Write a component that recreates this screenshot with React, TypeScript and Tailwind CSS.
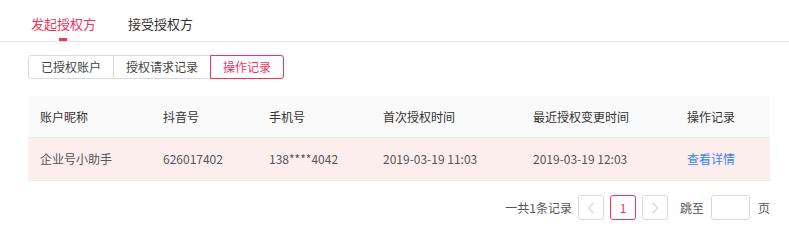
import React from "react";

const font = { fontFamily: '"Noto Sans CJK SC", "Noto Sans", sans-serif' };

export default function App() {
  const cols = [
    { w: "w-[123px]", h: "账户昵称", v: "企业号小助手" },
    { w: "w-[106px]", h: "抖音号", v: "626017402" },
    { w: "w-[114px]", h: "手机号", v: "138****4042" },
    { w: "w-[150px]", h: "首次授权时间", v: "2019-03-19 11:03" },
    { w: "w-[154px]", h: "最近授权变更时间", v: "2019-03-19 12:03" },
  ];
  return (
    <div className="w-[789px] h-[242px] bg-white text-[#333]" style={font}>
      <div className="flex h-[42px] border-b border-[#e8e8e8] pl-[31px] gap-[32px]">
        <div className="relative flex flex-col items-center pt-[14px] text-[13px] text-[#f5325c] leading-[20px]">
          发起授权方
          <div className="absolute left-[28px] top-[38px] w-[8px] h-[3px] bg-[#f5325c]" />
        </div>
        <div className="pt-[14px] text-[13px] leading-[20px] text-[#333]">接受授权方</div>
      </div>
      <div className="pl-[28px] pt-[13px] flex">
        <div className="flex h-[24px] text-[12px] leading-[22px]">
          <div className="px-[12px] border border-[#d9d9d9] rounded-l-[3px] text-[#444]">已授权账户</div>
          <div className="px-[12px] border-y border-[#d9d9d9] text-[#444]">授权请求记录</div>
          <div className="px-[12px] border border-[#f5325c] rounded-r-[3px] text-[#f5325c]">操作记录</div>
        </div>
      </div>
      <div className="ml-[28px] mt-[17px] w-[742px] text-[12px]">
        <div className="flex h-[42px] items-center bg-[#fafafa] border-b border-[#ebebeb] pl-[12px] text-[#333] rounded-t-[3px]">
          {cols.map((c) => (
            <div key={c.h} className={c.w}>{c.h}</div>
          ))}
          <div>操作记录</div>
        </div>
        <div className="flex h-[43px] items-center bg-[#fdeeee] border-b border-[#ebebeb] pl-[12px] text-[#555]">
          {cols.map((c) => (
            <div key={c.h} className={c.w}>{c.v}</div>
          ))}
          <div className="text-[#3b82f6]">查看详情</div>
        </div>
      </div>
      <div className="flex items-center justify-end pr-[19px] mt-[14px] text-[12px] text-[#555]">
        <span className="mr-[6px]">一共1条记录</span>
        <div className="w-[26px] h-[25px] border border-[#d9d9d9] rounded-[3px] flex items-center justify-center text-[#bbb]">
          <svg width="8" height="12" viewBox="0 0 8 12"><path d="M6 1L1.5 6L6 11" fill="none" stroke="#bbb" strokeWidth="1" /></svg>
        </div>
        <div className="ml-[6px] w-[26px] h-[25px] border border-[#f5325c] rounded-[3px] flex items-center justify-center text-[#f5325c]">1</div>
        <div className="ml-[6px] w-[26px] h-[25px] border border-[#d9d9d9] rounded-[3px] flex items-center justify-center">
          <svg width="8" height="12" viewBox="0 0 8 12"><path d="M2 1L6.5 6L2 11" fill="none" stroke="#bbb" strokeWidth="1" /></svg>
        </div>
        <span className="ml-[12px]">跳至</span>
        <div className="ml-[7px] w-[39px] h-[25px] border border-[#d9d9d9] rounded-[3px]" />
        <span className="ml-[8px]">页</span>
      </div>
    </div>
  );
}
